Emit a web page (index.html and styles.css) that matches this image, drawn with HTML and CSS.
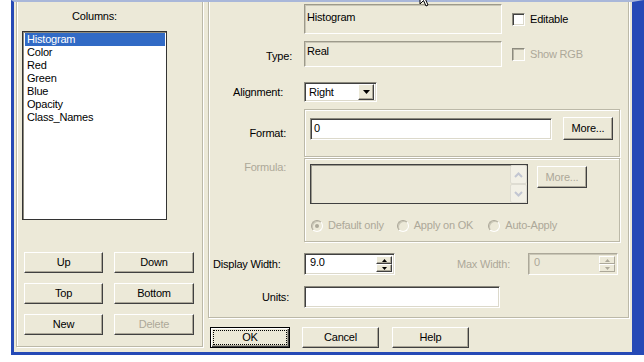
FILE: index.html
```html
<!DOCTYPE html>
<html>
<head>
<meta charset="utf-8">
<title>Column Properties</title>
<link rel="stylesheet" href="styles.css">
</head>
<body>
<div class="window">
  <div class="client">
    <section class="colgroup etched">
      <div class="col-title">Columns:</div>
      <ul class="listbox">
        <li class="sel">Histogram</li>
        <li>Color</li>
        <li>Red</li>
        <li>Green</li>
        <li>Blue</li>
        <li>Opacity</li>
        <li>Class_Names</li>
      </ul>
      <div class="btn-grid">
        <button class="btn">Up</button>
        <button class="btn">Down</button>
        <button class="btn">Top</button>
        <button class="btn">Bottom</button>
        <button class="btn">New</button>
        <button class="btn is-disabled">Delete</button>
      </div>
    </section>

    <div class="main">
      <section class="props etched">
        <div class="row r-name">
          <span class="lbl"></span>
          <div class="static static-name">Histogram</div>
          <div class="check"><span class="box"></span>Editable</div>
        </div>

        <div class="row r-type">
          <span class="lbl lbl-type">Type:</span>
          <div class="static static-type">Real</div>
          <div class="check is-disabled"><span class="box"></span>Show RGB</div>
        </div>

        <div class="row r-align">
          <span class="lbl lbl-align">Alignment:</span>
          <div class="select sunken">
            <span class="select-text">Right</span>
            <span class="drop-btn"><svg width="7" height="4" viewBox="0 0 7 4"><polygon points="0,0 7,0 3.5,4" fill="#000"/></svg></span>
          </div>
        </div>

        <div class="row r-format">
          <span class="lbl lbl-format">Format:</span>
          <div class="fmt-group etched">
            <div class="field sunken fmt-field">0</div>
            <button class="btn more-btn">More...</button>
          </div>
        </div>

        <div class="row r-formula">
          <span class="lbl lbl-formula is-disabled">Formula:</span>
          <div class="formula-group etched">
            <div class="formula-top">
              <div class="textarea">
                <div class="scroll">
                  <span class="sbtn"><svg width="9" height="6" viewBox="0 0 9 6"><polyline points="1,5 4.5,1.5 8,5" fill="none" stroke="#c2c6d2" stroke-width="2"/></svg></span>
                  <span class="sbtn"><svg width="9" height="6" viewBox="0 0 9 6"><polyline points="1,1 4.5,4.5 8,1" fill="none" stroke="#c2c6d2" stroke-width="2"/></svg></span>
                </div>
              </div>
              <button class="btn more-btn2 is-disabled">More...</button>
            </div>
            <div class="radios">
              <div class="radio"><span class="dot is-checked"></span>Default only</div>
              <div class="radio radio-2"><span class="dot"></span>Apply on OK</div>
              <div class="radio radio-3"><span class="dot"></span>Auto-Apply</div>
            </div>
          </div>
        </div>

        <div class="row r-width">
          <span class="lbl lbl-width">Display Width:</span>
          <div class="spinner sunken">
            <span class="spin-text">9.0</span>
            <span class="spin">
              <span class="sp"><svg width="5" height="3" viewBox="0 0 5 3"><polygon points="0,3 5,3 2.5,0" fill="#000"/></svg></span>
              <span class="sp"><svg width="5" height="3" viewBox="0 0 5 3"><polygon points="0,0 5,0 2.5,3" fill="#000"/></svg></span>
            </span>
          </div>
          <span class="lbl-max is-disabled">Max Width:</span>
          <div class="spinner spinner-max sunken">
            <span class="spin-text">0</span>
            <span class="spin">
              <span class="sp"><svg width="5" height="3" viewBox="0 0 5 3"><polygon points="0,3 5,3 2.5,0" fill="#aca899"/></svg></span>
              <span class="sp"><svg width="5" height="3" viewBox="0 0 5 3"><polygon points="0,0 5,0 2.5,3" fill="#aca899"/></svg></span>
            </span>
          </div>
        </div>

        <div class="row r-units">
          <span class="lbl lbl-units">Units:</span>
          <div class="field sunken units-field"></div>
        </div>
      </section>

      <div class="actions">
        <button class="btn btn-ok">OK</button>
        <button class="btn btn-cancel">Cancel</button>
        <button class="btn btn-help">Help</button>
      </div>
    </div>
  </div>
</div>
<svg class="cursor" width="14" height="20" viewBox="0 0 14 20"><polygon points="1,1 1,16 4.5,12.5 7,18 9,17 6.5,11.5 11,11.5" fill="#fff" stroke="#000" stroke-width="1"/></svg>
</body>
</html>
```

FILE: styles.css
```css
* { box-sizing: border-box; margin: 0; padding: 0; }

html, body {
  width: 644px;
  height: 362px;
  overflow: hidden;
  background: #fff;
}

body {
  font-family: "Liberation Sans", Arial, sans-serif;
  font-size: 11px;
  line-height: 13px;
  letter-spacing: -0.2px;
  color: #000;
}

.window {
  margin-left: 11px;
  width: 633px;
  height: 355px;
  border-left: 3px solid #2549b6;
  border-right: 12px solid #2549b6;
  border-top: 2px solid #a9b7d9;
  border-bottom: 3px solid #2549b6;
}

.client {
  display: flex;
  height: 100%;
  background: #ece9d8;
  overflow: hidden;
}

.etched {
  border: 1px solid #bcb9a8;
  box-shadow: inset 1px 1px 0 #fff, 1px 1px 0 #fff;
}

.is-disabled { color: #aca899; }

/* ---------- left column group ---------- */
.colgroup {
  flex: none;
  margin: -3px 0 0 2px;
  width: 187px;
  height: 348px;
}

.col-title {
  margin: 10px 0 0 5px;
  width: 145px;
  height: 13px;
  text-align: center;
}

.listbox {
  list-style: none;
  margin: 8px 0 0 5px;
  width: 145px;
  height: 189px;
  background: #fff;
  border: 1px solid #333;
  box-shadow: inset 1px 1px 0 #8c8a7e;
  padding: 1px 1px 1px 2px;
}

.listbox li {
  height: 13px;
  padding-left: 2px;
  white-space: nowrap;
}

.listbox li.sel {
  background: #316ac5;
  color: #fff;
}

.btn-grid {
  display: grid;
  grid-template-columns: 79px 80px;
  grid-auto-rows: 21px;
  column-gap: 11px;
  row-gap: 10px;
  margin: 32px 0 0 7px;
}

.btn {
  font: inherit;
  letter-spacing: inherit;
  color: #000;
  height: 21px;
  padding: 0;
  background: #ece9d8;
  border: 1px solid;
  border-color: #fff #404040 #404040 #fff;
  box-shadow: inset -1px -1px 0 #aca899;
  text-align: center;
}

.btn.is-disabled { color: #aca899; }

/* ---------- right panel ---------- */
.main {
  flex: none;
  margin-left: 5px;
  width: 421px;
  display: flex;
  flex-direction: column;
}

.props {
  flex: none;
  margin-top: -3px;
  height: 319px;
}

.row {
  display: flex;
  align-items: center;
}

.lbl {
  flex: none;
  width: 95px;
  text-align: right;
  white-space: nowrap;
}

.r-name { margin-top: 4px; height: 30px; }
.r-type { margin-top: 7px; height: 26px; }
.r-align { margin-top: 15px; height: 20px; }
.r-format { margin-top: 7px; height: 48px; }
.r-formula { margin-top: 1px; height: 84px; }
.r-width { margin-top: 11px; height: 22px; }
.r-units { margin-top: 11px; height: 22px; }

.lbl-type { padding-right: 12px; padding-top: 4px; }
.lbl-align { padding-right: 21px; }
.lbl-format { padding-right: 18px; }
.lbl-formula { padding-right: 18px; align-self: flex-start; padding-top: 3px; }
.lbl-width { text-align: left; padding-left: 4px; padding-top: 1px; }
.lbl-units { padding-right: 15px; padding-top: 1px; }

.static {
  flex: none;
  width: 198px;
  border: 1px solid;
  border-color: #9d9a8b #fff #fff #9d9a8b;
  box-shadow: inset 1px 1px 0 #c9c6b6;
  padding-left: 2px;
}

.static-name { height: 30px; padding-top: 6px; }
.static-type { height: 26px; padding-top: 3px; }

.check {
  display: flex;
  align-items: center;
  margin-left: 10px;
}

.box {
  flex: none;
  width: 13px;
  height: 13px;
  margin-right: 5px;
  background: #fff;
  border: 1px solid;
  border-color: #8c8a7e #fff #fff #8c8a7e;
  box-shadow: inset 1px 1px 0 #404040, inset -1px -1px 0 #dcd9cb;
}

.check.is-disabled { color: #aca899; }
.check.is-disabled .box {
  background: #ece9d8;
  box-shadow: inset 1px 1px 0 #b9b6a6;
}

.sunken {
  background: #fff;
  border: 1px solid;
  border-color: #8c8a7e #fff #fff #8c8a7e;
  box-shadow: inset 1px 1px 0 #404040, inset -1px -1px 0 #dcd9cb;
}

.select {
  flex: none;
  display: flex;
  align-items: center;
  width: 73px;
  height: 20px;
  padding: 0 2px 0 4px;
}

.select-text { flex: 1; }

.drop-btn {
  width: 16px;
  height: 16px;
  display: flex;
  align-items: center;
  justify-content: center;
  background: #ece9d8;
  border: 1px solid;
  border-color: #fff #404040 #404040 #fff;
  box-shadow: inset -1px -1px 0 #aca899;
}

.fmt-group {
  flex: none;
  display: flex;
  align-items: flex-start;
  width: 316px;
  height: 48px;
  padding: 8px 0 0 5px;
}

.field {
  flex: none;
  height: 22px;
  padding: 3px 0 0 3px;
}

.fmt-field { width: 242px; }

.more-btn {
  width: 50px;
  height: 23px;
  margin: -1px 0 0 11px;
}

.formula-group {
  flex: none;
  display: flex;
  flex-direction: column;
  width: 316px;
  height: 84px;
  padding: 5px 0 0 5px;
}

.formula-top {
  display: flex;
  align-items: flex-start;
}

.textarea {
  flex: none;
  display: flex;
  justify-content: flex-end;
  width: 218px;
  height: 40px;
  background: #ebe8d8;
  border: 1px solid #404040;
  box-shadow: inset 1px 1px 0 #9c9a8e;
}

.scroll {
  display: flex;
  flex-direction: column;
  width: 17px;
}

.sbtn {
  height: 19px;
  display: flex;
  align-items: center;
  justify-content: center;
  background: #f2f0e6;
  border: 1px solid #dedcd2;
  border-radius: 2px;
}

.more-btn2 {
  width: 50px;
  height: 22px;
  margin: 2px 0 0 9px;
}

.radios {
  display: flex;
  align-items: center;
  height: 13px;
  margin: 15px 0 0 1px;
}

.radio {
  display: flex;
  align-items: center;
  color: #aca899;
  white-space: nowrap;
}

.radio-2 { margin-left: 13px; }
.radio-3 { margin-left: 15px; }

.dot {
  flex: none;
  position: relative;
  width: 12px;
  height: 12px;
  margin-right: 5px;
  border-radius: 50%;
  border: 1px solid;
  border-color: #aca899 #fff #fff #aca899;
  box-shadow: inset 1px 1px 0 #c9c6b6;
  background: #ece9d8;
}

.dot.is-checked::after {
  content: "";
  position: absolute;
  left: 3px;
  top: 3px;
  width: 4px;
  height: 4px;
  border-radius: 50%;
  background: #aca899;
}

.spinner {
  flex: none;
  display: flex;
  align-items: stretch;
  width: 91px;
  height: 22px;
  padding: 2px 2px 2px 0;
}

.spin-text {
  flex: 1;
  padding: 0 0 0 5px;
  line-height: 13px;
}

.spin {
  display: flex;
  flex-direction: column;
  width: 16px;
}

.sp {
  flex: 1;
  display: flex;
  align-items: center;
  justify-content: center;
  background: #ece9d8;
  border: 1px solid;
  border-color: #fff #404040 #404040 #fff;
  box-shadow: inset -1px -1px 0 #aca899;
}

.lbl-max {
  flex: none;
  width: 133px;
  text-align: right;
  padding-right: 18px;
}

.spinner-max {
  width: 90px;
  background: #ece9d8;
  color: #aca899;
  border-color: #aca899 #fff #fff #aca899;
  box-shadow: inset 1px 1px 0 #c9c6b6;
}

.spinner-max .sp {
  border-color: #fff #aca899 #aca899 #fff;
  box-shadow: none;
}

.units-field { width: 196px; }

/* ---------- bottom buttons ---------- */
.actions {
  display: flex;
  margin-top: 9px;
}

.btn-ok {
  width: 80px;
  margin-left: 2px;
  border: 1px solid #000;
  box-shadow: inset 1px 1px 0 #fff, inset -1px -1px 0 #404040, inset -2px -2px 0 #aca899;
  outline: 1px dotted #000;
  outline-offset: -4px;
}

.btn-cancel { width: 77px; margin-left: 12px; }
.btn-help { width: 77px; margin-left: 13px; }

.cursor {
  position: absolute;
  left: 419px;
  top: -12px;
}
```
